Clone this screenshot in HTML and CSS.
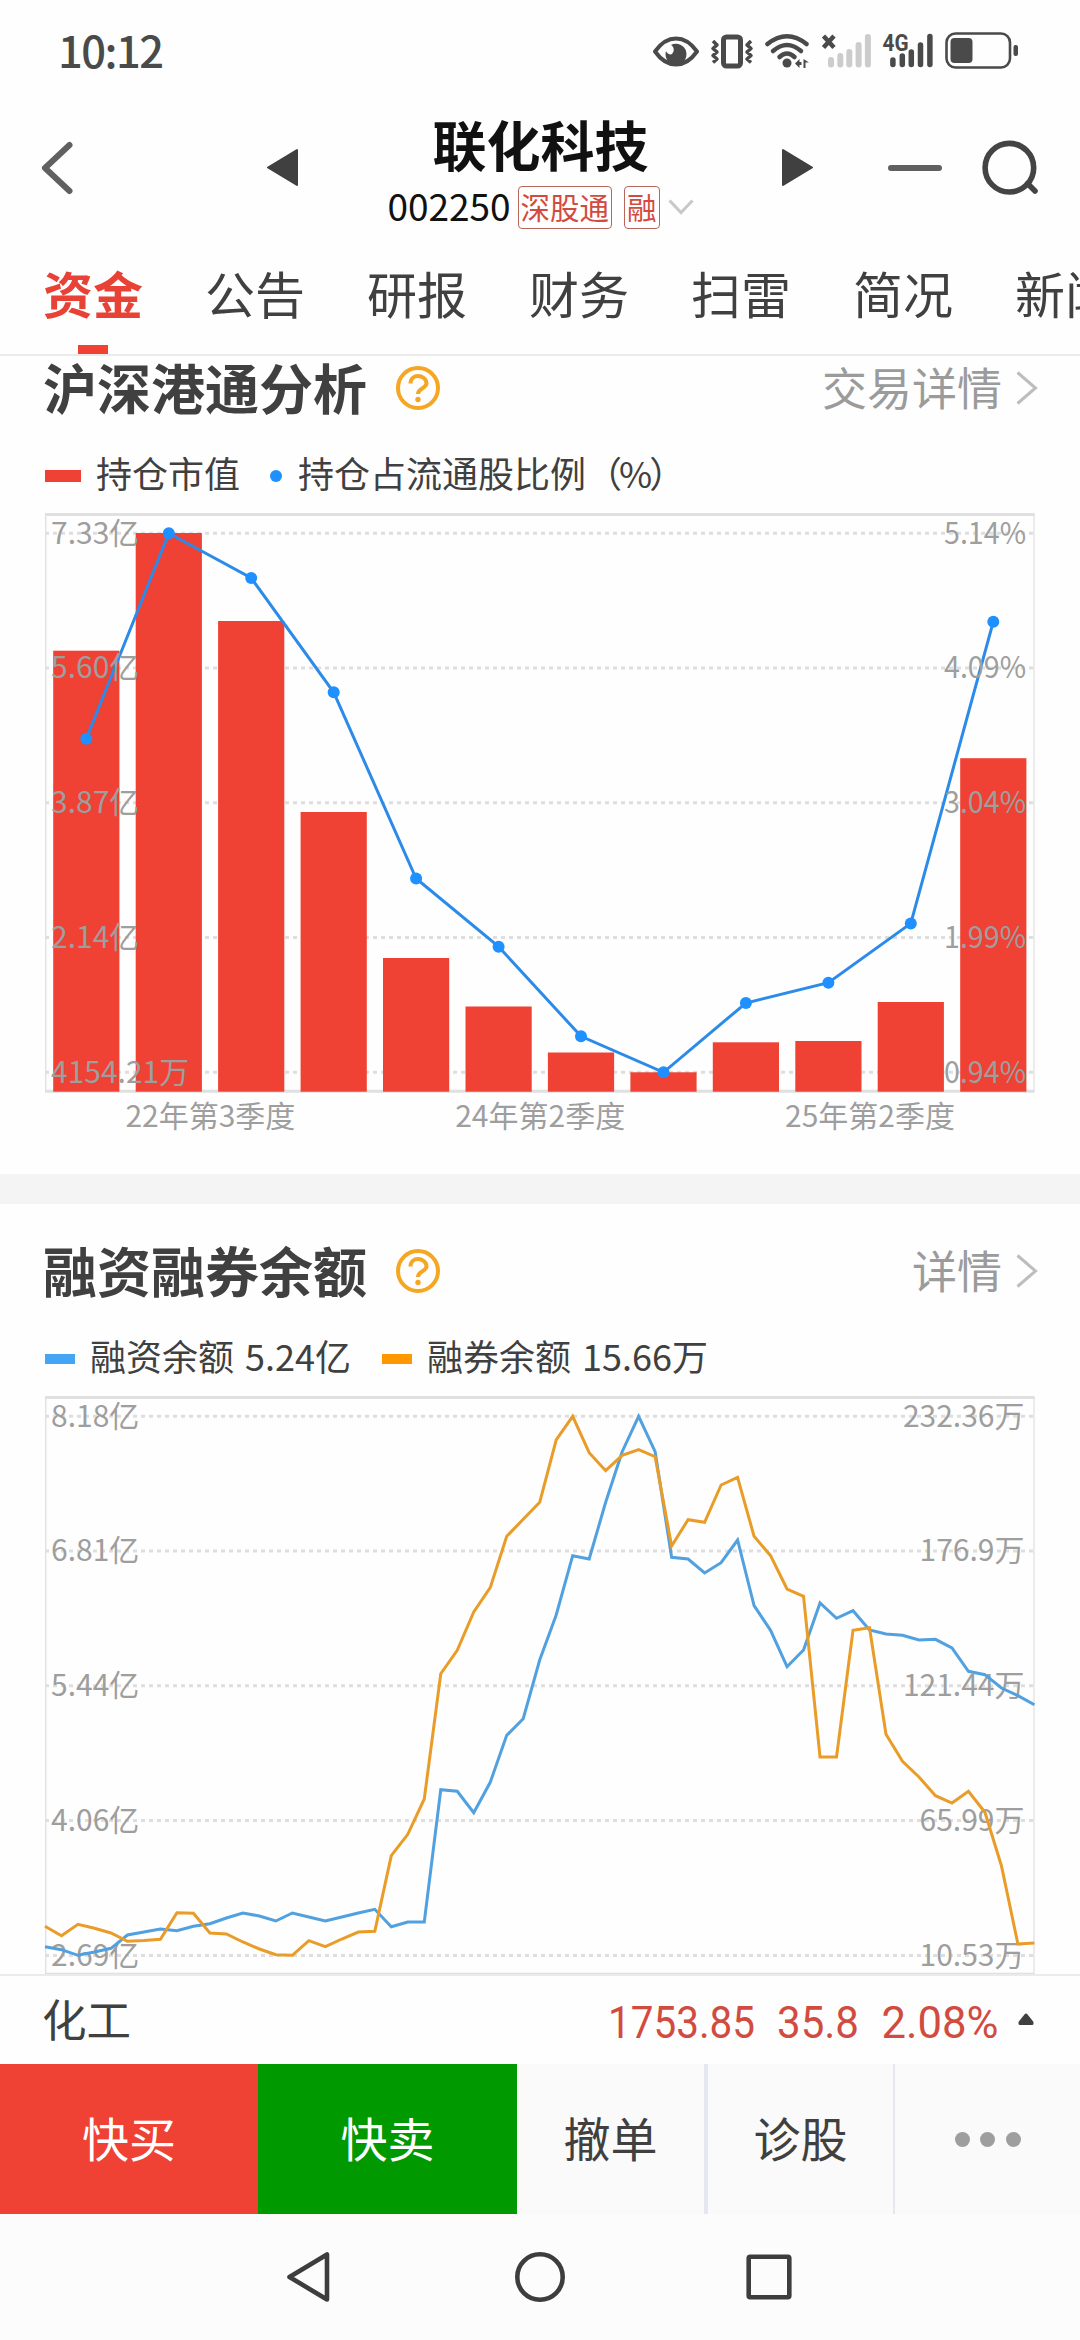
FILE: index.html
```html
<!DOCTYPE html>
<html lang="zh-CN">
<head>
  <meta charset="UTF-8">
  <title>联化科技 002250</title>
  <link rel="stylesheet" href="styles.css">
</head>
<body>

  <!-- status bar -->
  <div class="status">
    <span class="clock">10:12</span>
    <svg class="status-icons" width="372" height="44" viewBox="650 28 372 44">
      <!-- eye -->
      <path d="M655 51.5C661 43 668 38.500 676 38.500S691 43 697 51.500C691 60 684 64.500 676 64.500S661 60 655 51.500Z" fill="none" stroke="#4a4a4a" stroke-width="4" stroke-linejoin="round"/>
      <path d="M671 45A10.500 10.500 0 1 1 666 51A6 6 0 0 0 671 54.500A5.500 5.500 0 0 0 671 45Z" fill="#4a4a4a"/>
      <!-- vibrate -->
      <rect x="723.500" y="37" width="17" height="29" rx="3" fill="none" stroke="#4a4a4a" stroke-width="5"/>
      <path d="M713 41l4 4-4 3.500 4 3.500-4 3.500 4 3.500-4 3.500M751 41l-4 4 4 3.500-4 3.500 4 3.500-4 3.500 4 3.500" fill="none" stroke="#4a4a4a" stroke-width="3.500" stroke-linejoin="round"/>
      <!-- wifi -->
      <g fill="none" stroke="#4a4a4a" stroke-width="4.500" stroke-linecap="round">
        <path d="M767.500 44Q787 28.500 806.500 44"/>
        <path d="M773 51Q787 39 801 51"/>
        <path d="M779.500 57Q787 50 794.500 57"/>
      </g>
      <circle cx="787" cy="63" r="4.500" fill="#4a4a4a"/>
      <path d="M795 63.500l4.500-4.500v9zM799.500 62h2v3h-2zM803.500 59l5.500 3.500h-3.500v5.500h-2z" fill="#4a4a4a"/>
      <!-- sim 1, no service -->
      <path d="M823.500 36l10.500 11.500M834 36l-10.500 11.500" stroke="#4a4a4a" stroke-width="4.500"/>
      <path d="M831 60v4.500M840.300 56v8.500M849.300 52v12.500M858.600 45v19.500M867.900 37v27.500" stroke="#ccc" stroke-width="6" stroke-linecap="round"/>
      <!-- sim 2 -->
      <text x="882.500" y="51" class="net" textLength="26" lengthAdjust="spacingAndGlyphs">4G</text>
      <path d="M892.900 60v4.500M902.300 56v8.500M911.300 52v12.500M920.500 45v19.500M929.900 36.500v28" stroke="#4a4a4a" stroke-width="5.500" stroke-linecap="round"/>
      <!-- battery -->
      <rect x="946.500" y="33.500" width="63.500" height="34" rx="9" fill="none" stroke="#4a4a4a" stroke-width="2.600"/>
      <rect x="950.500" y="38" width="22" height="25" rx="4" fill="#4a4a4a"/>
      <rect x="1013.500" y="45" width="4.500" height="11" rx="2" fill="#4a4a4a"/>
    </svg>
  </div>

  <!-- title bar -->
  <header class="header">
    <svg class="head-left" width="270" height="60" viewBox="40 137 270 60">
      <path d="M69.500 145L45 168l24.500 23" fill="none" stroke="#606060" stroke-width="6" stroke-linecap="round" stroke-linejoin="round"/>
      <path d="M268 167.500L297 150v35z" fill="#404040" stroke="#404040" stroke-width="2" stroke-linejoin="round"/>
    </svg>
    <div class="stock">
      <h1>联化科技</h1>
      <div class="code">
        <span class="num">002250</span>
        <span class="tag">深股通</span>
        <span class="tag tag-rong">融</span>
        <svg class="down" width="26" height="17" viewBox="0 0 26 17"><path d="M1.500 1.500L13 13.500 24.500 1.500" fill="none" stroke="#c8c8c8" stroke-width="3"/></svg>
      </div>
    </div>
    <svg class="head-right" width="262" height="60" viewBox="778 137 262 60">
      <path d="M812 167.500L783 150v35z" fill="#404040" stroke="#404040" stroke-width="2" stroke-linejoin="round"/>
      <path d="M891 168h48" stroke="#606060" stroke-width="6" stroke-linecap="round"/>
      <circle cx="1009.400" cy="167.700" r="24.300" fill="none" stroke="#444" stroke-width="5.600"/>
      <path d="M1027.500 183.500l7.500 7.500" stroke="#444" stroke-width="5.600" stroke-linecap="round"/>
    </svg>
  </header>

  <nav class="tabs">
    <a class="active">资金</a>
    <a>公告</a>
    <a>研报</a>
    <a>财务</a>
    <a>扫雷</a>
    <a>简况</a>
    <a>新闻</a>
  </nav>

  <main class="content">
    <section class="panel panel-hsgt">
      <div class="panel-head">
        <h2>沪深港通分析</h2>
        <svg class="help" width="44" height="44" viewBox="0 0 44 44">
          <circle cx="22" cy="22" r="20" fill="none" stroke="#f5a623" stroke-width="4"/>
          <path d="M14.500 17.500C14.500 12.500 18 10 22 10S30.500 13 30.500 17.300C30.500 22.500 22 22 22 28" fill="none" stroke="#f5a623" stroke-width="4"/>
          <circle cx="22" cy="33.500" r="2.700" fill="#f5a623"/>
        </svg>
        <a class="more">交易详情</a>
        <svg class="arrow" width="22" height="34" viewBox="0 0 22 34"><path d="M1.500 1.500L19.500 17 1.500 32.500" fill="none" stroke="#bdbdbd" stroke-width="3"/></svg>
      </div>
      <div class="legend">
        <i class="bar"></i><span>持仓市值</span>
        <i class="dot"></i><span>持仓占流通股比例<em>（%）</em></span>
      </div>
      <svg class="chart" width="992" height="632" viewBox="44 513 992 632">
        <path class="grid" d="M45 533.300H1034M45 668H1034M45 802.700H1034M45 937.500H1034M45 1072.300H1034"/>
        <path d="M45.700 514V1091M1034 514V1091" stroke="#e0e0e0" stroke-width="1.300"/>
        <path d="M45 514.500H1034.600M45 1091.300H1034.600" stroke="#e0e0e0" stroke-width="3"/>
        <g fill="#ef4134">
          <rect x="53.200" y="650.700" width="66.200" height="441"/>
          <rect x="135.700" y="533" width="66.200" height="558.700"/>
          <rect x="218.100" y="621" width="66.200" height="470.700"/>
          <rect x="300.600" y="812" width="66.200" height="279.700"/>
          <rect x="383" y="958" width="66.200" height="133.700"/>
          <rect x="465.500" y="1006.500" width="66.200" height="85.200"/>
          <rect x="547.900" y="1052.500" width="66.200" height="39.200"/>
          <rect x="630.400" y="1072.300" width="66.200" height="19.400"/>
          <rect x="712.800" y="1042.300" width="66.200" height="49.400"/>
          <rect x="795.300" y="1041" width="66.200" height="50.700"/>
          <rect x="877.700" y="1002" width="66.200" height="89.700"/>
          <rect x="960.200" y="758.200" width="66.200" height="333.500"/>
        </g>
        <polyline points="86.300,738.700 168.800,533.300 251.200,578 333.700,692.300 416.100,878.500 498.600,946.700 581,1036.300 663.500,1072.300 745.900,1003 828.400,982.700 910.800,923.400 993.300,621.700" fill="none" stroke="#2c8be8" stroke-width="3"/>
        <g fill="#1e90ff">
          <circle cx="86.300" cy="738.700" r="6"/><circle cx="168.800" cy="533.300" r="6"/>
          <circle cx="251.200" cy="578" r="6"/><circle cx="333.700" cy="692.300" r="6"/>
          <circle cx="416.100" cy="878.500" r="6"/><circle cx="498.600" cy="946.700" r="6"/>
          <circle cx="581" cy="1036.300" r="6"/><circle cx="663.500" cy="1072.300" r="6"/>
          <circle cx="745.900" cy="1003" r="6"/><circle cx="828.400" cy="982.700" r="6"/>
          <circle cx="910.800" cy="923.400" r="6"/><circle cx="993.300" cy="621.700" r="6"/>
        </g>
        <g class="axis">
          <text x="51" y="543.500">7.33亿</text>
          <text x="51" y="678.300">5.60亿</text>
          <text x="51" y="813">3.87亿</text>
          <text x="51" y="948">2.14亿</text>
          <text x="51" y="1082.700">4154.21万</text>
        </g>
        <g class="axis">
          <text x="944" y="543.500" textLength="82" lengthAdjust="spacingAndGlyphs">5.14%</text>
          <text x="944" y="678.300" textLength="82" lengthAdjust="spacingAndGlyphs">4.09%</text>
          <text x="944" y="813" textLength="82" lengthAdjust="spacingAndGlyphs">3.04%</text>
          <text x="944" y="948" textLength="82" lengthAdjust="spacingAndGlyphs">1.99%</text>
          <text x="944" y="1082.700" textLength="82" lengthAdjust="spacingAndGlyphs">0.94%</text>
        </g>
        <g class="axis mid">
          <text x="210.400" y="1126.500">22年第3季度</text>
          <text x="540.200" y="1126.500">24年第2季度</text>
          <text x="870" y="1126.500">25年第2季度</text>
        </g>
      </svg>
    </section>

    <section class="panel panel-rzrq">
      <div class="panel-head">
        <h2>融资融券余额</h2>
        <svg class="help" width="44" height="44" viewBox="0 0 44 44">
          <circle cx="22" cy="22" r="20" fill="none" stroke="#f5a623" stroke-width="4"/>
          <path d="M14.500 17.500C14.500 12.500 18 10 22 10S30.500 13 30.500 17.300C30.500 22.500 22 22 22 28" fill="none" stroke="#f5a623" stroke-width="4"/>
          <circle cx="22" cy="33.500" r="2.700" fill="#f5a623"/>
        </svg>
        <a class="more">详情</a>
        <svg class="arrow" width="22" height="34" viewBox="0 0 22 34"><path d="M1.500 1.500L19.500 17 1.500 32.500" fill="none" stroke="#bdbdbd" stroke-width="3"/></svg>
      </div>
      <div class="legend legend-line">
        <i class="blue"></i><span>融资余额 5.24亿</span>
        <i class="orange"></i><span>融券余额 15.66万</span>
      </div>
      <svg class="chart" width="992" height="578" viewBox="44 1396 992 578">
        <path class="grid" d="M45 1416.300H1034M45 1551H1034M45 1685.700H1034M45 1820.500H1034M45 1955.500H1034"/>
        <path d="M45.700 1397V1974M1034 1397V1974M45 1973.500H1034" fill="none" stroke="#e0e0e0" stroke-width="1.300"/>
        <path d="M45 1397.500H1034.600" stroke="#e0e0e0" stroke-width="3"/>
        <g class="axis">
          <text x="51" y="1426.500">8.18亿</text>
          <text x="51" y="1561.300">6.81亿</text>
          <text x="51" y="1696">5.44亿</text>
          <text x="51" y="1831">4.06亿</text>
          <text x="51" y="1965.700">2.69亿</text>
        </g>
        <g class="axis end">
          <text x="1024.500" y="1426.500">232.36万</text>
          <text x="1024.500" y="1561.300">176.9万</text>
          <text x="1024.500" y="1696">121.44万</text>
          <text x="1024.500" y="1831">65.99万</text>
          <text x="1024.500" y="1965.700">10.53万</text>
        </g>
        <!-- x is the trading day, 16.49px each -->
        <g transform="translate(45 0) scale(16.49 1)">
          <polyline class="line rz" points="0,1946.700 1,1949.700 2,1955.300 3,1952 4,1948.300 5,1935 6,1932 7,1929 8,1930.700 9,1926.300 10,1923.700 11,1918 12,1913 13,1916 14,1921 15,1913 16,1917 17,1921 18,1917 19,1913 20,1909.300 21,1926.700 22,1922 23,1922 24,1789.700 25,1791.300 26,1812.700 27,1782.300 28,1735.300 29,1718.700 30,1660 31,1615 32,1555.700 33,1559 34,1502.300 35,1451.700 36,1416.300 37,1451.700 38,1557.300 39,1559 40,1573 41,1562.700 42,1540 43,1605.700 44,1630.300 45,1666.700 46,1650 47,1603 48,1618.300 49,1610.700 50,1630 51,1634 52,1635.300 53,1640 54,1639.300 55,1648 56,1671.300 57,1674.700 58,1688 59,1695.700 60,1704.700"/>
          <polyline class="line rq" points="0,1926.300 1,1935.700 2,1924.300 3,1928.300 4,1933 5,1941.300 6,1940.500 7,1939.300 8,1912.700 9,1913.300 10,1933 11,1934 12,1942 13,1949 14,1954.700 15,1955.300 16,1940.700 17,1946.700 18,1939 19,1932 20,1931.300 21,1855.700 22,1834.300 23,1799 24,1673.700 25,1650.300 26,1612 27,1587.700 28,1536.300 29,1519.300 30,1502.300 31,1440 32,1416.300 33,1452.700 34,1470.700 35,1455.300 36,1449.700 37,1456.700 38,1546 39,1519.700 40,1522.300 41,1485 42,1477.300 43,1536.300 44,1555.700 45,1589 46,1596.300 47,1757 48,1757 49,1630.300 50,1627.700 51,1734.300 52,1761.300 53,1777 54,1795.700 55,1803 56,1791.300 57,1812.300 58,1865.700 59,1944 60,1943"/>
        </g>
      </svg>
    </section>
  </main>

  <!-- sector quote -->
  <div class="quote">
    <span class="sector">化工</span>
    <svg width="430" height="44" viewBox="606 1999 430 44">
      <g class="price">
        <text x="608" y="2039" textLength="147" lengthAdjust="spacingAndGlyphs">1753.85</text>
        <text x="777" y="2039" textLength="82" lengthAdjust="spacingAndGlyphs">35.8</text>
        <text x="881.500" y="2039" textLength="117" lengthAdjust="spacingAndGlyphs">2.08%</text>
      </g>
      <path d="M1026 2016l6 7.500v1h-12v-1z" fill="#404040" stroke="#404040" stroke-width="3" stroke-linejoin="round"/>
    </svg>
  </div>

  <div class="actions">
    <button class="buy">快买</button>
    <button class="sell">快卖</button>
    <button class="cancel">撤单</button>
    <button class="diag">诊股</button>
    <button class="dots"><i></i><i></i><i></i></button>
  </div>

  <!-- system navigation -->
  <div class="sysnav">
    <svg width="510" height="54" viewBox="285 2250 510 54" fill="none" stroke="#3d3d3d" stroke-width="4.600" stroke-linejoin="round">
      <path d="M289.500 2277L327 2254.500v45z"/>
      <circle cx="540" cy="2277" r="22.700"/>
      <rect x="748.700" y="2256.700" width="40.600" height="40.600" rx="1.500"/>
    </svg>
  </div>

</body>
</html>
```
FILE: styles.css
```css
body {
  margin: 0;
  width: 1080px;
  height: 2340px;
  overflow: hidden;
  display: flex;
  flex-direction: column;
  background: #fefefe;
  color: #404040;
  font-family: "Noto Sans CJK SC", "Noto Sans", sans-serif;
}

h1, h2 {
  margin: 0;
  font-weight: bold;
}

svg {
  display: block;
  flex: none;
}

/* status bar */
.status {
  height: 102px;
  flex: none;
  display: flex;
  justify-content: space-between;
  align-items: flex-start;
  padding: 0 58px;
  box-sizing: border-box;
}

.clock {
  font-size: 43.500px;
  line-height: 64px;
  font-weight: 500;
  letter-spacing: -1.500px;
  color: #4a4a4a;
  padding-top: 18px;
}

.status-icons {
  margin-top: 28px;
}

.net {
  font-family: Roboto, sans-serif;
  font-size: 24px;
  font-weight: bold;
  fill: #4a4a4a;
}

/* title bar */
.header {
  height: 138px;
  flex: none;
  display: flex;
  justify-content: space-between;
  padding: 0 40px;
}

.head-left,
.head-right {
  margin-top: 35px;
}

.stock {
  display: flex;
  flex-direction: column;
  align-items: center;
  padding-top: 10px;
  padding-right: 7px;
}

.stock h1 {
  font-size: 54px;
  line-height: 64px;
  color: #111;
}

.code {
  display: flex;
  align-items: center;
  height: 44px;
  margin-top: 9px;
}

.code .num {
  font-size: 37px;
  line-height: 44px;
  color: #111;
  margin: -5px 7px 0 0;
}

.tag {
  box-sizing: border-box;
  height: 43px;
  border: 1.5px solid #b9655c;
  border-radius: 4px;
  padding: 0 2px;
  font-size: 29.500px;
  line-height: 38px;
  color: #d24b40;
}

.tag-rong {
  margin-left: 12px;
}

.down {
  margin-left: 8px;
}

/* tabs */
.tabs {
  height: 116px;
  flex: none;
  box-sizing: border-box;
  border-bottom: 2px solid #ebebeb;
  display: flex;
  gap: 62px;
  padding-left: 43px;
  overflow: hidden;
  white-space: nowrap;
}

.tabs a {
  flex: none;
  display: flex;
  flex-direction: column;
  align-items: center;
  font-size: 50px;
  line-height: 105px;
}

.tabs .active {
  color: #e84236;
  font-weight: bold;
}

.tabs .active::after {
  content: "";
  width: 30px;
  height: 9px;
  background: #ef4134;
}

/* panels */
.content {
  height: 1618px;
  flex: none;
  overflow: hidden;
}

.panel {
  padding: 0 42px 0 44px;
}

.panel-hsgt {
  height: 818px;
  border-bottom: 30px solid #f4f4f4;
}

.panel-head {
  height: 64px;
  display: flex;
  align-items: center;
}

.panel-rzrq .panel-head {
  padding-top: 35px;
}

.panel-head h2 {
  font-size: 54px;
  line-height: 64px;
  margin: -3px 0 0 -1px;
}

.help {
  margin: -1px 0 0 29px;
}

.more {
  margin: -3px 0 0 auto;
  font-size: 45px;
  line-height: 64px;
  color: #9b9b9b;
}

.arrow {
  margin: -1px 0 0 14px;
}

.legend {
  display: flex;
  align-items: center;
  height: 52px;
  padding: 29px 0 12px 1px;
  font-size: 36px;
  line-height: 52px;
  word-spacing: 3px;
}

.legend span {
  margin-top: -6px;
}

.legend em {
  font-style: normal;
  letter-spacing: -3px;
}

.legend i {
  flex: none;
  margin-top: 2px;
}

.legend .bar {
  width: 36px;
  height: 12px;
  margin-right: 15px;
  background: #ef4134;
}

.legend .dot {
  width: 12px;
  height: 12px;
  border-radius: 50%;
  margin: 1px 16px 0 30px;
  background: #1e90ff;
}

.legend .blue,
.legend .orange {
  width: 30px;
  height: 10px;
  margin-right: 15px;
  background: #45a5f5;
}

.legend .orange {
  margin-left: 31px;
  background: #ff9800;
}

/* charts */
.grid {
  fill: none;
  stroke: #dedede;
  stroke-width: 3;
  stroke-dasharray: 4 4;
}

.axis {
  font-size: 30px;
  fill: #9e9e9e;
}

.axis.end {
  text-anchor: end;
}

.axis.mid {
  text-anchor: middle;
}

.line {
  fill: none;
  stroke-width: 3;
  vector-effect: non-scaling-stroke;
}

.rz {
  stroke: #51a0df;
}

.rq {
  stroke: #e99c27;
}

/* sector quote */
.quote {
  height: 90px;
  flex: none;
  box-sizing: border-box;
  border-top: 2px solid #ebebeb;
  display: flex;
  align-items: center;
  justify-content: space-between;
  padding: 0 44px 0 42px;
}

.sector {
  font-size: 44.500px;
  line-height: 64px;
  margin-top: -5px;
}

.price {
  font-family: Roboto, sans-serif;
  font-size: 45px;
  fill: #d24b40;
}

/* bottom buttons */
.actions {
  height: 150px;
  flex: none;
  display: flex;
  background: #fafafa;
}

.actions button {
  box-sizing: border-box;
  border: 0;
  padding: 0 0 6px;
  background: none;
  font-family: inherit;
  font-size: 47px;
  color: #404040;
}

.actions .buy {
  width: 258px;
  background: #ef4134;
  color: #fff;
}

.actions .sell {
  width: 259px;
  background: #090;
  color: #fff;
}

.actions .cancel {
  width: 191px;
  border-right: 4px solid #e4e7f0;
}

.actions .diag {
  width: 187px;
  border-right: 2px solid #e4e7f0;
}

.actions .dots {
  width: 185px;
  padding: 0;
  display: flex;
  align-items: center;
  justify-content: center;
  gap: 10.500px;
}

.dots i {
  width: 15px;
  height: 15px;
  border-radius: 50%;
  background: #9e9e9e;
}

/* system navigation */
.sysnav {
  height: 126px;
  flex: none;
  display: flex;
  align-items: center;
  justify-content: center;
  background: #fcfcfc;
}
```
